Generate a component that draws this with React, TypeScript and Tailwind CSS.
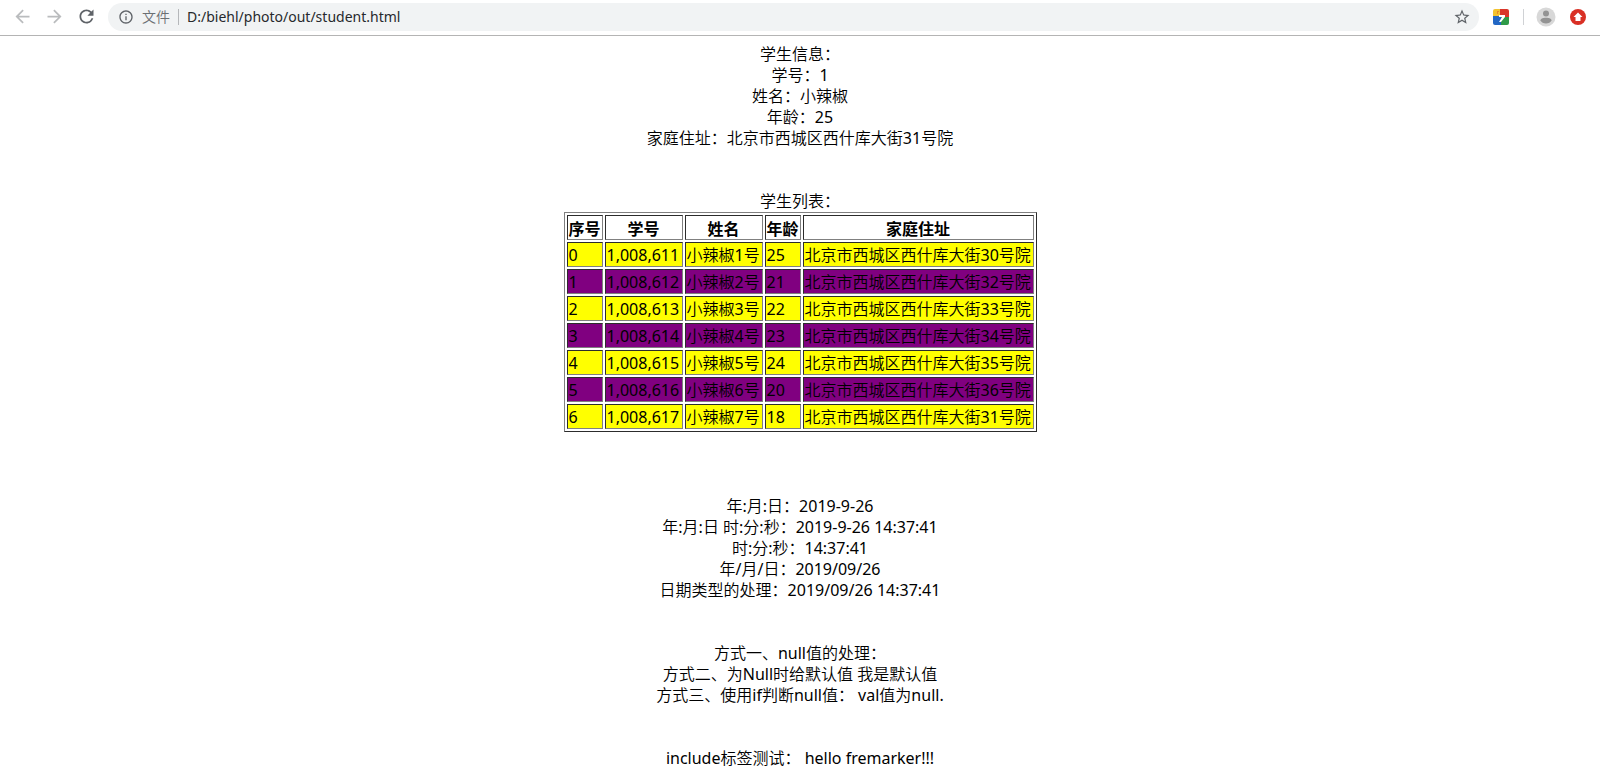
import { useState, type ReactNode } from "react";
import { MdArrowBack, MdArrowForward, MdInfoOutline, MdRefresh, MdStarBorder } from "react-icons/md";

const students = [
    { id: "1,008,611", name: "小辣椒1号", age: 25, address: "北京市西城区西什库大街30号院" },
    { id: "1,008,612", name: "小辣椒2号", age: 21, address: "北京市西城区西什库大街32号院" },
    { id: "1,008,613", name: "小辣椒3号", age: 22, address: "北京市西城区西什库大街33号院" },
    { id: "1,008,614", name: "小辣椒4号", age: 23, address: "北京市西城区西什库大街34号院" },
    { id: "1,008,615", name: "小辣椒5号", age: 24, address: "北京市西城区西什库大街35号院" },
    { id: "1,008,616", name: "小辣椒6号", age: 20, address: "北京市西城区西什库大街36号院" },
    { id: "1,008,617", name: "小辣椒7号", age: 18, address: "北京市西城区西什库大街31号院" }
];

const cell = "border border-t-[#2c2c2c] border-l-[#2c2c2c] border-r-[#808080] border-b-[#808080] px-px pt-0.5 pb-0";

function ExtensionIcon() {
    return (
        <svg width="16" height="16" viewBox="0 0 16 16" aria-hidden="true">
            <clipPath id="tile">
                <rect width="16" height="16" rx="2" />
            </clipPath>
            <g clipPath="url(#tile)">
                <path d="M0 0h8v8H0z" fill="#f2c230" />
                <path d="M7 0h9v8H7z" fill="#d9362b" />
                <path d="M0 7h8v9H0z" fill="#2367c4" />
                <path d="M8 8h8v8H8z" fill="#2f9a48" />
                <path d="M4 2h2v1H5v2H4z" fill="#e8892b" />
                <path d="M6 6h6v2l-4 5H6l3-5H6z" fill="#fff" />
            </g>
        </svg>
    );
}

function AvatarIcon() {
    return (
        <svg width="20" height="20" viewBox="0 0 20 20" aria-hidden="true">
            <circle cx="10" cy="10" r="9.5" fill="#d8d8d8" />
            <circle cx="10" cy="6.5" r="3" fill="#939393" />
            <path d="M4.5 13.5c0-2 2.5-2.8 5.5-2.8s5.5.8 5.5 2.8c-1 2-3 3-5.5 3s-4.5-1-5.5-3z" fill="#939393" />
        </svg>
    );
}

function UpdateIcon() {
    return (
        <svg width="16" height="16" viewBox="0 0 16 16" aria-hidden="true">
            <circle cx="8" cy="8" r="8" fill="#d93025" />
            <path d="M8 3.5 12.5 8h-2v4h-5V8h-2z" fill="#fff" />
        </svg>
    );
}

function Toolbar() {
    const [url, setUrl] = useState("D:/biehl/photo/out/student.html");

    return (
        <header className="flex items-center h-9 pl-3 pr-3.5 pb-0.5 border-b border-[#b4b4b4] bg-white">
            <div className="flex gap-[11px] text-[21px] mr-[11px]">
                <button type="button" aria-label="后退" className="text-[#babcbe]">
                    <MdArrowBack />
                </button>
                <button type="button" aria-label="前进" className="text-[#babcbe]">
                    <MdArrowForward />
                </button>
                <button type="button" aria-label="重新加载" className="text-[#5f6368]">
                    <MdRefresh />
                </button>
            </div>
            <div className="flex flex-1 items-center h-7 pl-2.5 pr-2 rounded-full bg-[#f1f3f4]">
                <MdInfoOutline className="size-4 text-[#5f6368]" />
                <label htmlFor="url" className="ml-2 text-sm text-[#6b6f73]">
                    文件
                </label>
                <span className="w-px h-4 mx-2 bg-[#b5b7ba]" />
                <input
                    id="url"
                    type="text"
                    value={url}
                    onChange={(e) => setUrl(e.target.value)}
                    className="flex-1 text-sm text-[#27292c] bg-transparent outline-none"
                />
                <button type="button" aria-label="添加书签" className="text-[#5f6368]">
                    <MdStarBorder className="size-[18px]" />
                </button>
            </div>
            <button type="button" aria-label="扩展程序" className="ml-3.5">
                <ExtensionIcon />
            </button>
            <span className="w-px h-4 ml-3.5 mr-3 bg-[#d0d2d5]" />
            <button type="button" aria-label="用户">
                <AvatarIcon />
            </button>
            <button type="button" aria-label="更新" className="ml-3.5">
                <UpdateIcon />
            </button>
        </header>
    );
}

function Lines({ children }: { children: ReactNode }) {
    return <section className="mb-[42px] last:mb-0">{children}</section>;
}

export default function App() {
    return (
        <div className="bg-white text-black font-['Noto_Sans','Noto_Sans_CJK_SC_DemiLight','Noto_Sans_CJK_SC',sans-serif]">
            <Toolbar />
            <main className="px-2 pt-2 text-base leading-[21px] text-center">
                <Lines>
                    <p>学生信息：</p>
                    <p>学号：1</p>
                    <p>姓名：小辣椒</p>
                    <p>年龄：25</p>
                    <p>家庭住址：北京市西城区西什库大街31号院</p>
                </Lines>

                <p id="list-title">学生列表：</p>
                <table
                    aria-labelledby="list-title"
                    className="mx-auto mb-16 border border-separate border-spacing-[2px] border-t-[#808080] border-l-[#808080] border-r-[#2c2c2c] border-b-[#2c2c2c]"
                >
                    <colgroup>
                        <col className="w-9" />
                        <col className="w-[78px]" />
                        <col className="w-[78px]" />
                        <col className="w-9" />
                        <col className="w-[231px]" />
                    </colgroup>
                    <thead className="font-['Noto_Sans_CJK_SC',sans-serif]">
                        <tr>
                            <th className={cell}>序号</th>
                            <th className={cell}>学号</th>
                            <th className={cell}>姓名</th>
                            <th className={cell}>年龄</th>
                            <th className={cell}>家庭住址</th>
                        </tr>
                    </thead>
                    <tbody className="text-left">
                        {students.map((student, index) => (
                            <tr key={student.id} className={index % 2 === 0 ? "bg-[#ffff00]" : "bg-[#800080]"}>
                                <td className={cell}>{index}</td>
                                <td className={cell}>{student.id}</td>
                                <td className={cell}>{student.name}</td>
                                <td className={cell}>{student.age}</td>
                                <td className={cell}>{student.address}</td>
                            </tr>
                        ))}
                    </tbody>
                </table>

                <Lines>
                    <p>年:月:日：2019-9-26</p>
                    <p>年:月:日 时:分:秒：2019-9-26 14:37:41</p>
                    <p>时:分:秒：14:37:41</p>
                    <p>年/月/日：2019/09/26</p>
                    <p>日期类型的处理：2019/09/26 14:37:41</p>
                </Lines>

                <Lines>
                    <p>方式一、null值的处理：</p>
                    <p>方式二、为Null时给默认值 我是默认值</p>
                    <p>方式三、使用if判断null值： val值为null.</p>
                </Lines>

                <Lines>
                    <p>include标签测试： hello fremarker!!!</p>
                </Lines>
            </main>
        </div>
    );
}
